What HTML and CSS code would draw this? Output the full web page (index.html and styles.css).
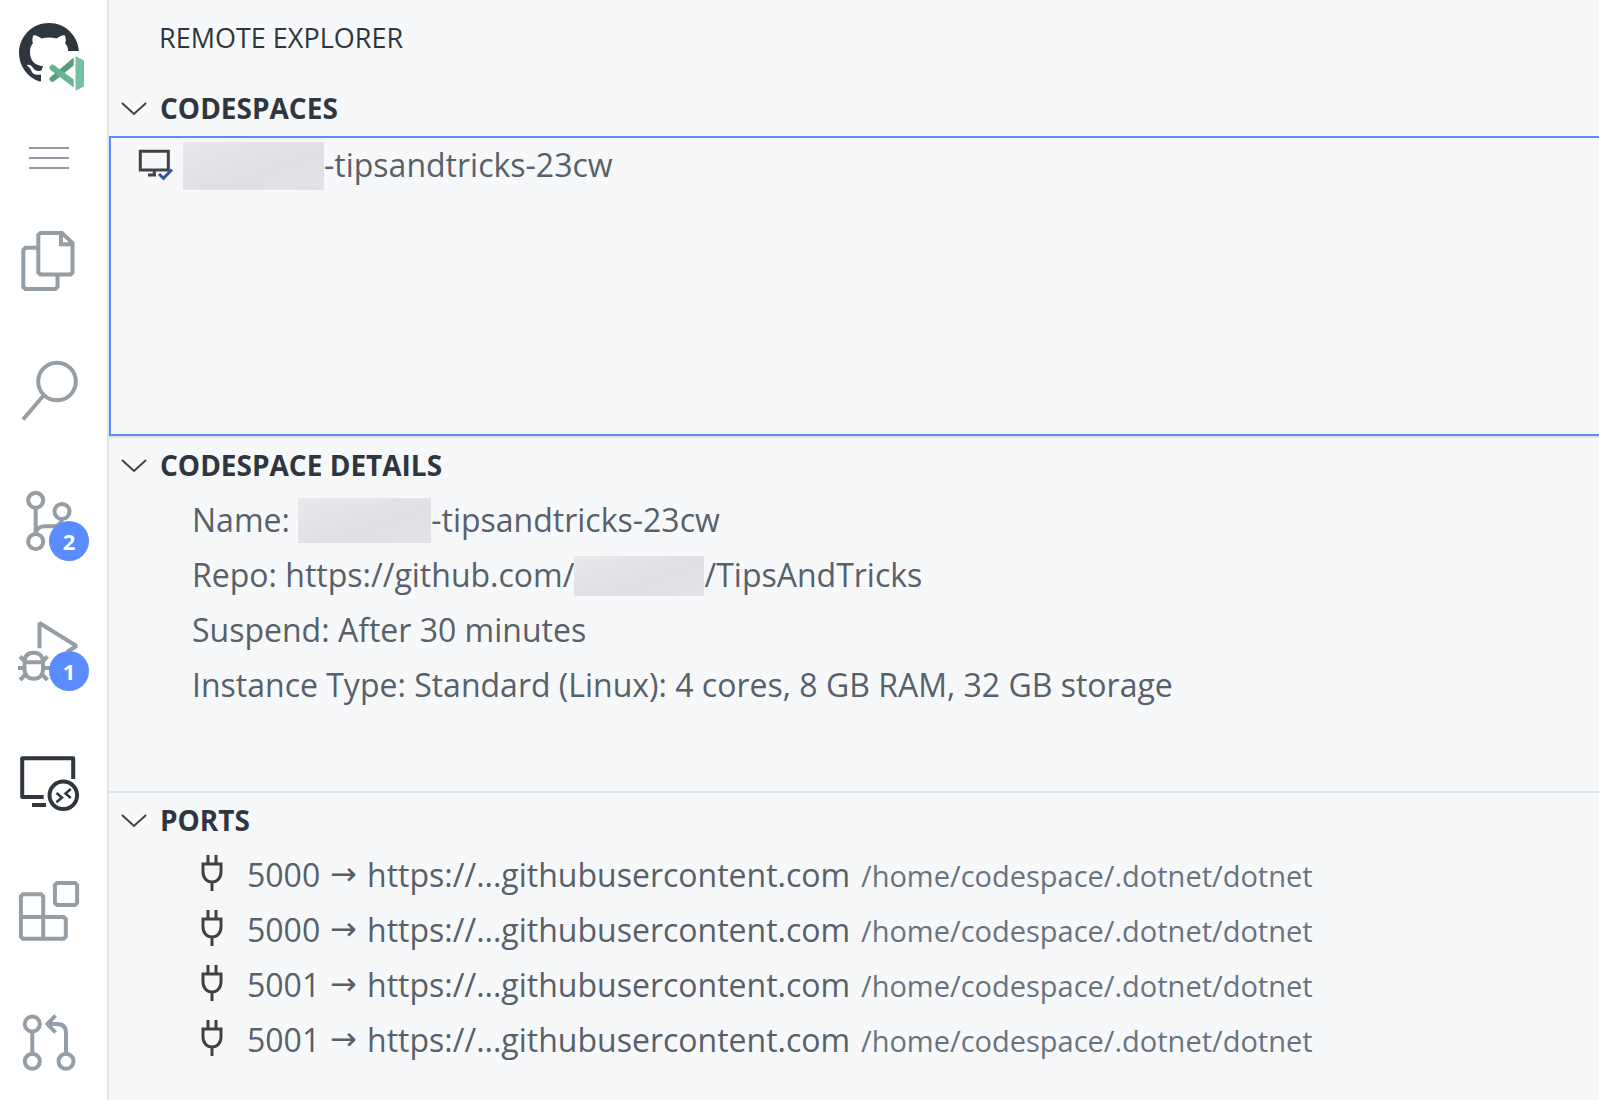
FILE: index.html
```html
<!DOCTYPE html>
<html lang="en">
<head>
<meta charset="utf-8">
<title>Remote Explorer</title>
<link rel="stylesheet" href="styles.css">
</head>
<body>
<div class="workbench">
  <nav class="activity-bar" aria-label="Activity bar">
    <a class="logo" href="#" aria-label="Codespaces home">
      <svg width="66" height="68" viewBox="0 0 66 68">
        <path fill="#30363d" transform="scale(3.75)" d="M8 0C3.58 0 0 3.58 0 8c0 3.54 2.29 6.53 5.47 7.59.4.07.55-.17.55-.38 0-.19-.01-.82-.01-1.49-2.01.37-2.53-.49-2.69-.94-.09-.23-.48-.94-.82-1.13-.28-.15-.68-.52-.01-.53.63-.01 1.08.58 1.23.82.72 1.21 1.87.87 2.33.66.07-.52.28-.87.51-1.07-1.78-.2-3.64-.89-3.64-3.95 0-.87.31-1.59.82-2.15-.08-.2-.36-1.02.08-2.12 0 0 .67-.21 2.2.82.64-.18 1.32-.27 2-.27.68 0 1.36.09 2 .27 1.53-1.04 2.2-.82 2.2-.82.44 1.1.16 1.92.08 2.12.51.56.82 1.27.82 2.15 0 3.07-1.87 3.75-3.65 3.95.29.25.54.73.54 1.48 0 1.07-.01 1.93-.01 2.2 0 .21.15.46.55.38A8.013 8.013 0 0016 8c0-4.42-3.58-8-8-8z"/>
        <path fill="#fff" d="M24 28H66V68H22V49H24z"/>
        <path fill="#5b9b80" d="M54.700 34.500V42.500L35.500 58Q33 60 31 57.500Q29.500 55.500 31.500 54z"/>
        <path fill="#68b396" d="M54.700 64.500V56.500L35.500 42.500Q33 40.500 31 43Q29.500 45 31.500 47z"/>
        <path fill="#76c0a6" d="M56.500 33L65 37.500V63.500L56.500 67.700z"/>
      </svg>
    </a>
    <button class="menu" type="button" aria-label="Application menu">
      <svg width="40" height="24" viewBox="0 0 40 24" stroke="#959ba5" stroke-width="2"><path d="M0 2H40M0 12H40M0 22H40"/></svg>
    </button>
    <button class="activity" type="button" aria-label="Explorer">
      <svg class="glyph" viewBox="0 0 60 60"><path d="M43 1.900H21.500L19.300 4V41.500L21.500 43.500H51.500L53.500 41.500V12zM42 2V13.200H54M17.500 16.800H6.500L4.300 19V56L6.500 58H36.500L38.500 56V45"/></svg>
    </button>
    <button class="activity" type="button" aria-label="Search">
      <svg class="glyph" viewBox="0 0 60 60"><circle cx="38" cy="20.500" r="18.800"/><path d="M25 34L4 58.500"/></svg>
    </button>
    <button class="activity" type="button" aria-label="Source control">
      <svg class="glyph" viewBox="0 0 60 60"><circle cx="16.700" cy="9.300" r="7.500"/><circle cx="43" cy="20.500" r="7.500"/><circle cx="16.700" cy="50.500" r="7.500"/><path d="M16.700 17V43C17 39 20 35.300 26 35.300H35C39 35.300 42 33 43 28"/></svg>
      <span class="badge">2</span>
    </button>
    <button class="activity" type="button" aria-label="Run and debug">
      <svg class="glyph" viewBox="0 0 60 60"><path d="M20.500 27.300V2L57.500 25L48 31" stroke-linejoin="bevel"/><path d="M5.500 41.300H24M5.500 41.300C5.500 35 9 31.800 14.700 31.800S24 35 24 41.300V48C24 54 20.500 57.800 14.700 57.800S5.500 54 5.500 48zM-1 47H5M24 47H31M1 35.500L6 40.500M28.500 35.500L23.500 40.500M1 59L7 53M28.500 59L22.500 53"/></svg>
      <span class="badge">1</span>
    </button>
    <button class="activity active" type="button" aria-label="Remote explorer" aria-current="page">
      <svg class="glyph" viewBox="0 0 60 60"><path stroke-linejoin="round" d="M24.700 46H3.200V7.200H54.200V28M13 54H27"/><circle cx="44.300" cy="44.300" r="18" fill="#fff" stroke="none"/><circle cx="44.300" cy="44.300" r="13.800"/><path stroke-width="2.500" d="M37.500 42L43 46.500L37.500 51.300M51.800 38L46.500 42.500L51.800 47"/></svg>
    </button>
    <button class="activity" type="button" aria-label="Extensions">
      <svg class="glyph" viewBox="0 0 60 60"><path d="M4 13.200H22L24.200 15.400V36H44.600L46.800 38.200V55.600L44.600 57.800H4L1.900 55.600V15.400zM2 36H24.200V58M38 1.900H56L58.100 4V22L56 24.100H38L35.900 22V4z"/></svg>
    </button>
    <button class="activity" type="button" aria-label="Pull requests">
      <svg class="glyph" viewBox="0 0 60 60"><circle cx="13.300" cy="13" r="7.500"/><circle cx="13.300" cy="50.300" r="7.500"/><circle cx="47" cy="50.300" r="7.500"/><path d="M13.300 20.500V43M47 43V22Q47 13 38 13H29M36.500 4.500L28.500 13L36.500 21.500"/></svg>
    </button>
  </nav>

  <main class="sidebar">
    <h1 class="title">REMOTE EXPLORER</h1>

    <section class="pane">
      <h2 class="pane-heading"><button class="pane-toggle" type="button" aria-expanded="true"><svg class="chevron" viewBox="0 0 24 14"><path d="M0 1L12 12L24 1"/></svg>CODESPACES</button></h2>
      <ul class="tree focused">
        <li class="row codespace">
          <svg class="monitor" width="36" height="32" viewBox="0 0 36 32"><path fill="none" stroke="#424242" stroke-width="3" d="M2.300 2.300H30.300V21H2.300zM16.300 21V25.500M10 26H18"/><path fill="none" stroke="#2f55a4" stroke-width="3" d="M21 25L25.500 29.300L34 20.500"/></svg>
          <span class="redacted large"></span><span class="label">-tipsandtricks-23cw</span>
        </li>
      </ul>
    </section>

    <section class="pane">
      <h2 class="pane-heading"><button class="pane-toggle" type="button" aria-expanded="true"><svg class="chevron" viewBox="0 0 24 14"><path d="M0 1L12 12L24 1"/></svg>CODESPACE DETAILS</button></h2>
      <ul class="tree details">
        <li class="row"><span class="label">Name: </span><span class="redacted medium"></span><span class="label">-tipsandtricks-23cw</span></li>
        <li class="row"><span class="label">Repo: https://github.com/</span><span class="redacted small"></span><span class="label">/TipsAndTricks</span></li>
        <li class="row"><span class="label">Suspend: After 30 minutes</span></li>
        <li class="row"><span class="label">Instance Type: Standard (Linux): 4 cores, 8 GB RAM, 32 GB storage</span></li>
      </ul>
    </section>

    <section class="pane">
      <h2 class="pane-heading"><button class="pane-toggle" type="button" aria-expanded="true"><svg class="chevron" viewBox="0 0 24 14"><path d="M0 1L12 12L24 1"/></svg>PORTS</button></h2>
      <ul class="tree ports">
        <li class="row port"><svg class="plug" viewBox="0 0 22 36"><path d="M7 0V9M15 0V9M2 9H20V17C20 23 16 27 11 27S2 23 2 17zM11 27V36"/></svg><span class="label number">5000</span><span class="label arrow">→</span><span class="label host">https://...githubusercontent.com</span><span class="process">/home/codespace/.dotnet/dotnet</span></li>
        <li class="row port"><svg class="plug" viewBox="0 0 22 36"><path d="M7 0V9M15 0V9M2 9H20V17C20 23 16 27 11 27S2 23 2 17zM11 27V36"/></svg><span class="label number">5000</span><span class="label arrow">→</span><span class="label host">https://...githubusercontent.com</span><span class="process">/home/codespace/.dotnet/dotnet</span></li>
        <li class="row port"><svg class="plug" viewBox="0 0 22 36"><path d="M7 0V9M15 0V9M2 9H20V17C20 23 16 27 11 27S2 23 2 17zM11 27V36"/></svg><span class="label number">5001</span><span class="label arrow">→</span><span class="label host">https://...githubusercontent.com</span><span class="process">/home/codespace/.dotnet/dotnet</span></li>
        <li class="row port"><svg class="plug" viewBox="0 0 22 36"><path d="M7 0V9M15 0V9M2 9H20V17C20 23 16 27 11 27S2 23 2 17zM11 27V36"/></svg><span class="label number">5001</span><span class="label arrow">→</span><span class="label host">https://...githubusercontent.com</span><span class="process">/home/codespace/.dotnet/dotnet</span></li>
      </ul>
    </section>
  </main>
</div>
</body>
</html>
```
FILE: styles.css
```css
* {
  box-sizing: border-box;
}

body {
  margin: 0;
  background: #f6f8fa;
  color: #586069;
  font-family: "Segoe UI", "Open Sans", "Noto Sans", sans-serif;
  font-size: 32px;
}

button {
  padding: 0;
  border: 0;
  background: none;
  color: inherit;
  font: inherit;
}

svg {
  display: block;
  flex: none;
  overflow: visible;
}

.workbench {
  display: flex;
  min-height: 100vh;
}

.activity-bar {
  display: flex;
  flex: none;
  flex-direction: column;
  align-items: flex-start;
  width: 109px;
  padding: 23px 0 0 19px;
  border-right: 2px solid #e1e4e8;
  background: #fff;
}

.menu {
  margin: 55px 0 26px 10px;
}

.activity {
  position: relative;
  padding: 35px 0;
  color: #959da5;
}

.activity.active {
  color: #2f363d;
}

.glyph {
  width: 60px;
  height: 60px;
  fill: none;
  stroke: currentColor;
  stroke-width: 4;
}

.badge {
  position: absolute;
  top: 65px;
  left: 30px;
  width: 40px;
  height: 40px;
  border-radius: 50%;
  background: #5a8bff;
  color: #fff;
  font-size: 22px;
  font-weight: 700;
  line-height: 40px;
  text-align: center;
}

.sidebar {
  display: flex;
  flex: 1;
  flex-direction: column;
  min-width: 0;
}

.title {
  margin: 0;
  padding: 10px 50px 15px;
  color: #2f363d;
  font-size: 27px;
  font-weight: 400;
  line-height: 56px;
}

.pane {
  display: flex;
  flex-direction: column;
  min-height: 355px;
}

.pane + .pane {
  border-top: 2px solid #e1e4e8;
}

.pane:last-child {
  flex: 1;
  min-height: 0;
}

.pane-heading {
  margin: 0;
  color: #2f363d;
  font-size: 28px;
  font-weight: 700;
  line-height: 55px;
}

.pane-toggle {
  display: flex;
  gap: 14px;
  align-items: center;
  width: 100%;
  padding-left: 13px;
}

.chevron {
  width: 24px;
  height: 14px;
  fill: none;
  stroke: #424242;
  stroke-width: 2;
}

.tree {
  flex: 1;
  margin: 0;
  padding: 0;
  list-style: none;
}

.focused {
  border: 2px solid #5a8bff;
  border-right: 0;
}

.row {
  display: flex;
  align-items: center;
  height: 55px;
  white-space: pre;
}

.label {
  padding-bottom: 3px;
}

.codespace {
  padding-left: 27px;
}

.monitor {
  margin-right: 9px;
  margin-bottom: 2px;
}

.details {
  padding-left: 83px;
}

.ports {
  padding-left: 92px;
}

.redacted {
  background: linear-gradient(160deg, #e8e9eb, #dfe0e4 60%, #e3e4e7);
}

.large {
  width: 141px;
  height: 48px;
}

.medium {
  width: 133px;
  height: 45px;
}

.small {
  width: 130px;
  height: 40px;
}

.plug {
  width: 22px;
  height: 36px;
  margin-right: 24px;
  margin-bottom: 5px;
  fill: none;
  stroke: #424242;
  stroke-width: 3;
}

.number {
  width: 83px;
}

.arrow {
  width: 37px;
  font-family: "DejaVu Sans", sans-serif;
}

.host {
  width: 494px;
}

.process {
  color: #6a737d;
  font-size: 29px;
}
```
